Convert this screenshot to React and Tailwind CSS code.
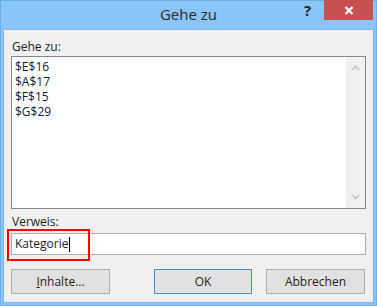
import React from 'react';

const font = { fontFamily: '"Open Sans", "Noto Sans", sans-serif' };

export default function App() {
    const entries = ['$E$16', '$A$17', '$F$15', '$G$29'];

    return (
        <div
            className="w-[377px] h-[306px] bg-[#8ac5f7] border border-[#6eaee6] flex flex-col text-[12px] text-[#1e1e1e]"
            style={font}
        >
            {/* Title bar */}
            <div className="h-[28px] shrink-0 relative flex items-start justify-center">
                <span className="text-[15px] leading-none mt-[6px] text-[#2b2b2b]">Gehe zu</span>
                <span className="absolute left-[303px] top-[0px] text-[15px] font-bold leading-none mt-[2px] text-[#222]">?</span>
                <div className="absolute left-[323px] top-[-1px] w-[49px] h-[20px] bg-[#c75050] flex items-center justify-center">
                    <svg width="10" height="9" viewBox="0 0 10 9">
                        <path d="M1.5 1 L8.5 8 M8.5 1 L1.5 8" stroke="#fff" strokeWidth="2.2" />
                    </svg>
                </div>
            </div>

            {/* Client area */}
            <div className="flex-1 mx-[2px] mb-[2px] bg-[#f0f0f0] border border-[#7fb4e4] px-[7px] flex flex-col">
                <div className="mt-[8px] h-[18px] leading-[18px] pl-[1px]">Gehe zu:</div>

                {/* List box */}
                <div className="h-[153px] border border-[#828790] bg-white flex">
                    <div className="flex-1 pt-[2px] pl-[3px] text-[#0f1a3a]">
                        {entries.map((e) => (
                            <div key={e} className="h-[15px] leading-[15px]">{e}</div>
                        ))}
                    </div>
                    <div className="w-[19px] bg-[#f0f0f0] flex flex-col items-center justify-between py-[8px]">
                        <svg width="9" height="6" viewBox="0 0 9 6">
                            <path d="M1 5 L4.5 1.5 L8 5" stroke="#c2c2c2" strokeWidth="1.6" fill="none" />
                        </svg>
                        <svg width="9" height="6" viewBox="0 0 9 6">
                            <path d="M1 1 L4.5 4.5 L8 1" stroke="#c2c2c2" strokeWidth="1.6" fill="none" />
                        </svg>
                    </div>
                </div>

                <div className="mt-[4px] h-[18px] leading-[18px] pl-[1px]">Verweis:</div>

                {/* Reference input with highlight */}
                <div className="relative mt-[2px] h-[22px] border border-[#abadb3] bg-white flex items-center pl-[3px]">
                    <span>Kategorie</span>
                    <span className="w-px h-[15px] bg-black ml-[1px]" />
                    <div className="absolute left-[-5px] top-[-5px] w-[83px] h-[32px] border-2 border-[#ff0000]" />
                </div>

                {/* Buttons */}
                <div className="mt-[14px] flex items-center">
                    <div className="w-[99px] h-[25px] border border-[#adadad] bg-[#e1e1e1] flex items-center justify-center">
                        <span><span className="underline">I</span>nhalte...</span>
                    </div>
                    <div className="ml-[44px] w-[98px] h-[25px] border border-[#3c8fd9] bg-[#e1e1e1] flex items-center justify-center">
                        OK
                    </div>
                    <div className="ml-[14px] w-[99px] h-[25px] border border-[#adadad] bg-[#e1e1e1] flex items-center justify-center">
                        Abbrechen
                    </div>
                </div>
            </div>
        </div>
    );
}
